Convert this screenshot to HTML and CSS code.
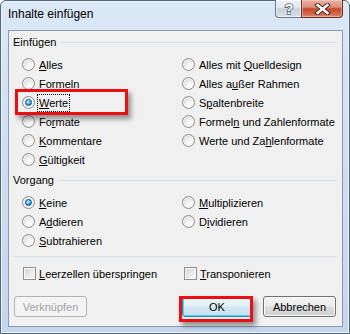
FILE: index.html
```html
<!DOCTYPE html>
<html lang="de">
<head>
<meta charset="utf-8">
<title>Inhalte einfügen</title>
<link rel="stylesheet" href="styles.css">
</head>
<body>
<div class="window">
  <div class="titlebar">
    <span class="title">Inhalte einfügen</span>
    <div class="caption-btns">
      <div class="cap help">
        <svg width="14" height="15" viewBox="0 0 14 15"><text x="7" y="12.5" text-anchor="middle" class="qmark">?</text></svg>
      </div>
      <div class="cap close">
        <svg width="17" height="12" viewBox="0 0 17 12"><path d="M3.5 2 L13.5 10 M13.5 2 L3.5 10" stroke="#3b2621" stroke-width="4.4" stroke-linecap="square" fill="none"/><path d="M3.5 2 L13.5 10 M13.5 2 L3.5 10" stroke="#ffffff" stroke-width="2.4" stroke-linecap="square" fill="none"/></svg>
      </div>
    </div>
  </div>
  <div class="client">
    <div class="group-label"><span>Einfügen</span></div>
    <div class="options rows6">
      <label class="opt"><span class="radio"></span><span class="txt"><u>A</u>lles</span></label>
      <label class="opt"><span class="radio"></span><span class="txt">Formeln</span></label>
      <label class="opt"><span class="radio on"></span><span class="txt focus"><u>W</u>erte</span></label>
      <label class="opt"><span class="radio"></span><span class="txt">Fo<u>r</u>mate</span></label>
      <label class="opt"><span class="radio"></span><span class="txt"><u>K</u>ommentare</span></label>
      <label class="opt"><span class="radio"></span><span class="txt"><u>G</u>ültigkeit</span></label>
      <label class="opt"><span class="radio"></span><span class="txt">Alles mit <u>Q</u>uelldesign</span></label>
      <label class="opt"><span class="radio"></span><span class="txt">Alles a<u>u</u>ßer Rahmen</span></label>
      <label class="opt"><span class="radio"></span><span class="txt">S<u>p</u>altenbreite</span></label>
      <label class="opt"><span class="radio"></span><span class="txt">Formel<u>n</u> und Zahlenformate</span></label>
      <label class="opt"><span class="radio"></span><span class="txt">Werte und Za<u>h</u>lenformate</span></label>
    </div>
    <div class="group-label second"><span>Vorgang</span></div>
    <div class="options rows3">
      <label class="opt"><span class="radio on"></span><span class="txt"><u>K</u>eine</span></label>
      <label class="opt"><span class="radio"></span><span class="txt">A<u>d</u>dieren</span></label>
      <label class="opt"><span class="radio"></span><span class="txt"><u>S</u>ubtrahieren</span></label>
      <label class="opt"><span class="radio"></span><span class="txt"><u>M</u>ultiplizieren</span></label>
      <label class="opt"><span class="radio"></span><span class="txt">D<u>i</u>vidieren</span></label>
    </div>
    <div class="separator"></div>
    <div class="checks">
      <label class="opt chk"><span class="check"></span><span class="txt"><u>L</u>eerzellen überspringen</span></label>
      <label class="opt chk"><span class="check"></span><span class="txt"><u>T</u>ransponieren</span></label>
    </div>
    <div class="buttons">
      <div class="btn disabled">Verknüpfen</div>
      <div class="btn default ok">OK</div>
      <div class="btn cancel">Abbrechen</div>
    </div>
  </div>
  <div class="mark mark-werte"></div>
  <div class="mark mark-ok"></div>
</div>
</body>
</html>
```
FILE: styles.css
```css
html, body {
  margin: 0;
  padding: 0;
  background: #ffffff;
}

.window {
  position: relative;
  width: 350px;
  height: 334px;
  box-sizing: border-box;
  border: 1px solid #52657c;
  border-radius: 6px 6px 0 0;
  background: linear-gradient(180deg, #dbe8f6 0%, #cfe0f2 40%, #c3d6ec 100%);
  box-shadow: inset 0 0 0 1px #eef5fc;
  display: flex;
  flex-direction: column;
  font-family: "Liberation Sans", Arial, sans-serif;
  font-size: 11px;
  color: #000;
}

.titlebar {
  flex: none;
  height: 29px;
  display: flex;
  align-items: flex-start;
  padding: 0 6px 0 7px;
}

.title {
  margin-top: 5px;
  font-size: 12px;
  line-height: 16px;
  color: #000;
}

.caption-btns {
  margin-left: auto;
  margin-top: -1px;
  display: flex;
}

.cap {
  height: 18px;
  box-sizing: border-box;
  border: 1px solid #6a7888;
  border-top: none;
  display: flex;
  align-items: center;
  justify-content: center;
}

.help {
  width: 26px;
  border-right: none;
  border-radius: 0 0 0 4px;
  background: linear-gradient(180deg, #eef3f8 0%, #dfe6ee 45%, #c7d2de 52%, #d6dee8 100%);
  box-shadow: inset 0 0 0 1px rgba(255,255,255,0.55);
}

.qmark {
  font-family: "Liberation Sans", Arial, sans-serif;
  font-size: 14px;
  font-weight: bold;
  fill: #ffffff;
  stroke: #56616f;
  stroke-width: 1.6px;
  paint-order: stroke;
}

.close {
  width: 42px;
  border-radius: 0 0 4px 0;
  border-color: #6b2d22;
  background: linear-gradient(180deg, #e9b2a3 0%, #dc8f7a 42%, #c5462c 52%, #d0674b 80%, #dc8a6e 100%);
  box-shadow: inset 0 0 0 1px rgba(255,220,210,0.45);
}

.client {
  flex: 1;
  margin: 0 6px 6px 7px;
  background: #f0f0f0;
  border: 1px solid #8a9bb0;
  padding-top: 3px;
  display: flex;
  flex-direction: column;
}

.group-label {
  height: 16px;
  line-height: 16px;
  display: flex;
  align-items: center;
  padding: 0 5px 0 4px;
}

.group-label::after {
  content: "";
  flex: 1;
  height: 1px;
  margin-left: 5px;
  background: #d5dfe5;
}

.group-label.second {
  margin-top: 3px;
}

.options {
  margin-top: 5px;
  padding-left: 13px;
  display: grid;
  grid-template-columns: 160px 1fr;
  grid-auto-flow: column;
}

.rows6 {
  grid-template-rows: repeat(6, 19px);
}

.rows3 {
  grid-template-rows: repeat(3, 19px);
}

.opt {
  display: flex;
  align-items: center;
  gap: 4px;
  line-height: 16px;
  white-space: nowrap;
}

.txt u {
  text-underline-offset: 1px;
}

.txt.focus {
  outline: 1px dotted #000;
  outline-offset: 0;
  padding: 0 1px;
  margin-left: -1px;
}

.radio {
  flex: none;
  position: relative;
  width: 13px;
  height: 13px;
  box-sizing: border-box;
  border-radius: 50%;
  border: 1px solid #8c8c8c;
  background: radial-gradient(circle at 65% 70%, #ffffff 0%, #f2f2f2 35%, #dadada 75%, #c9c9c9 100%);
  box-shadow: inset 0 0 0 1px #f6f6f6;
}

.radio.on::after {
  content: "";
  position: absolute;
  left: 2px;
  top: 2px;
  width: 7px;
  height: 7px;
  box-sizing: border-box;
  border-radius: 50%;
  border: 1px solid #1b4f80;
  background: radial-gradient(circle at 40% 35%, #d4f4ff 0%, #5ec3f0 40%, #1773bd 80%, #0d4f8e 100%);
}

.separator {
  margin: 6px 5px 0 4px;
  height: 1px;
  background: #d5dfe5;
}

.checks {
  margin-top: 7px;
  padding-left: 14px;
  display: grid;
  grid-template-columns: 161px 1fr;
  height: 19px;
}

.chk {
  gap: 3px;
}

.check {
  flex: none;
  width: 13px;
  height: 13px;
  box-sizing: border-box;
  border: 1px solid #8f8f8f;
  background: linear-gradient(135deg, #d2d2d2 0%, #ececec 60%, #fbfbfb 100%);
  box-shadow: inset 0 0 0 1px #f7f7f7;
}

.buttons {
  margin-top: 13px;
  padding: 0 6px 0 5px;
  display: flex;
}

.btn {
  box-sizing: border-box;
  height: 21px;
  width: 73px;
  border: 1px solid #707070;
  border-radius: 3px;
  background: linear-gradient(180deg, #f3f3f3 0%, #ebebeb 48%, #dddddd 52%, #cfcfcf 100%);
  box-shadow: inset 0 0 0 1px #fbfbfb;
  display: flex;
  align-items: center;
  justify-content: center;
  font-size: 11px;
  color: #000;
}

.btn.disabled {
  border-color: #adb2b5;
  background: #f4f4f4;
  box-shadow: none;
  color: #a2a2a2;
}

.btn.ok {
  margin-left: auto;
  width: 70px;
  border-color: #3c7fb1;
  background: linear-gradient(180deg, #eaf6fd 0%, #e2f0f8 48%, #d3e8f4 52%, #c9e0ee 100%);
  box-shadow: inset 0 0 0 1px #48d7f6;
}

.btn.cancel {
  margin-left: 11px;
}

.mark {
  position: absolute;
  box-sizing: border-box;
  border: 3px solid #ec0f12;
  box-shadow: 3px 4px 5px rgba(0, 0, 0, 0.4);
}

.mark-werte {
  left: 14px;
  top: 88px;
  width: 113px;
  height: 26px;
}

.mark-ok {
  left: 178px;
  top: 295px;
  width: 74px;
  height: 26px;
}
```
